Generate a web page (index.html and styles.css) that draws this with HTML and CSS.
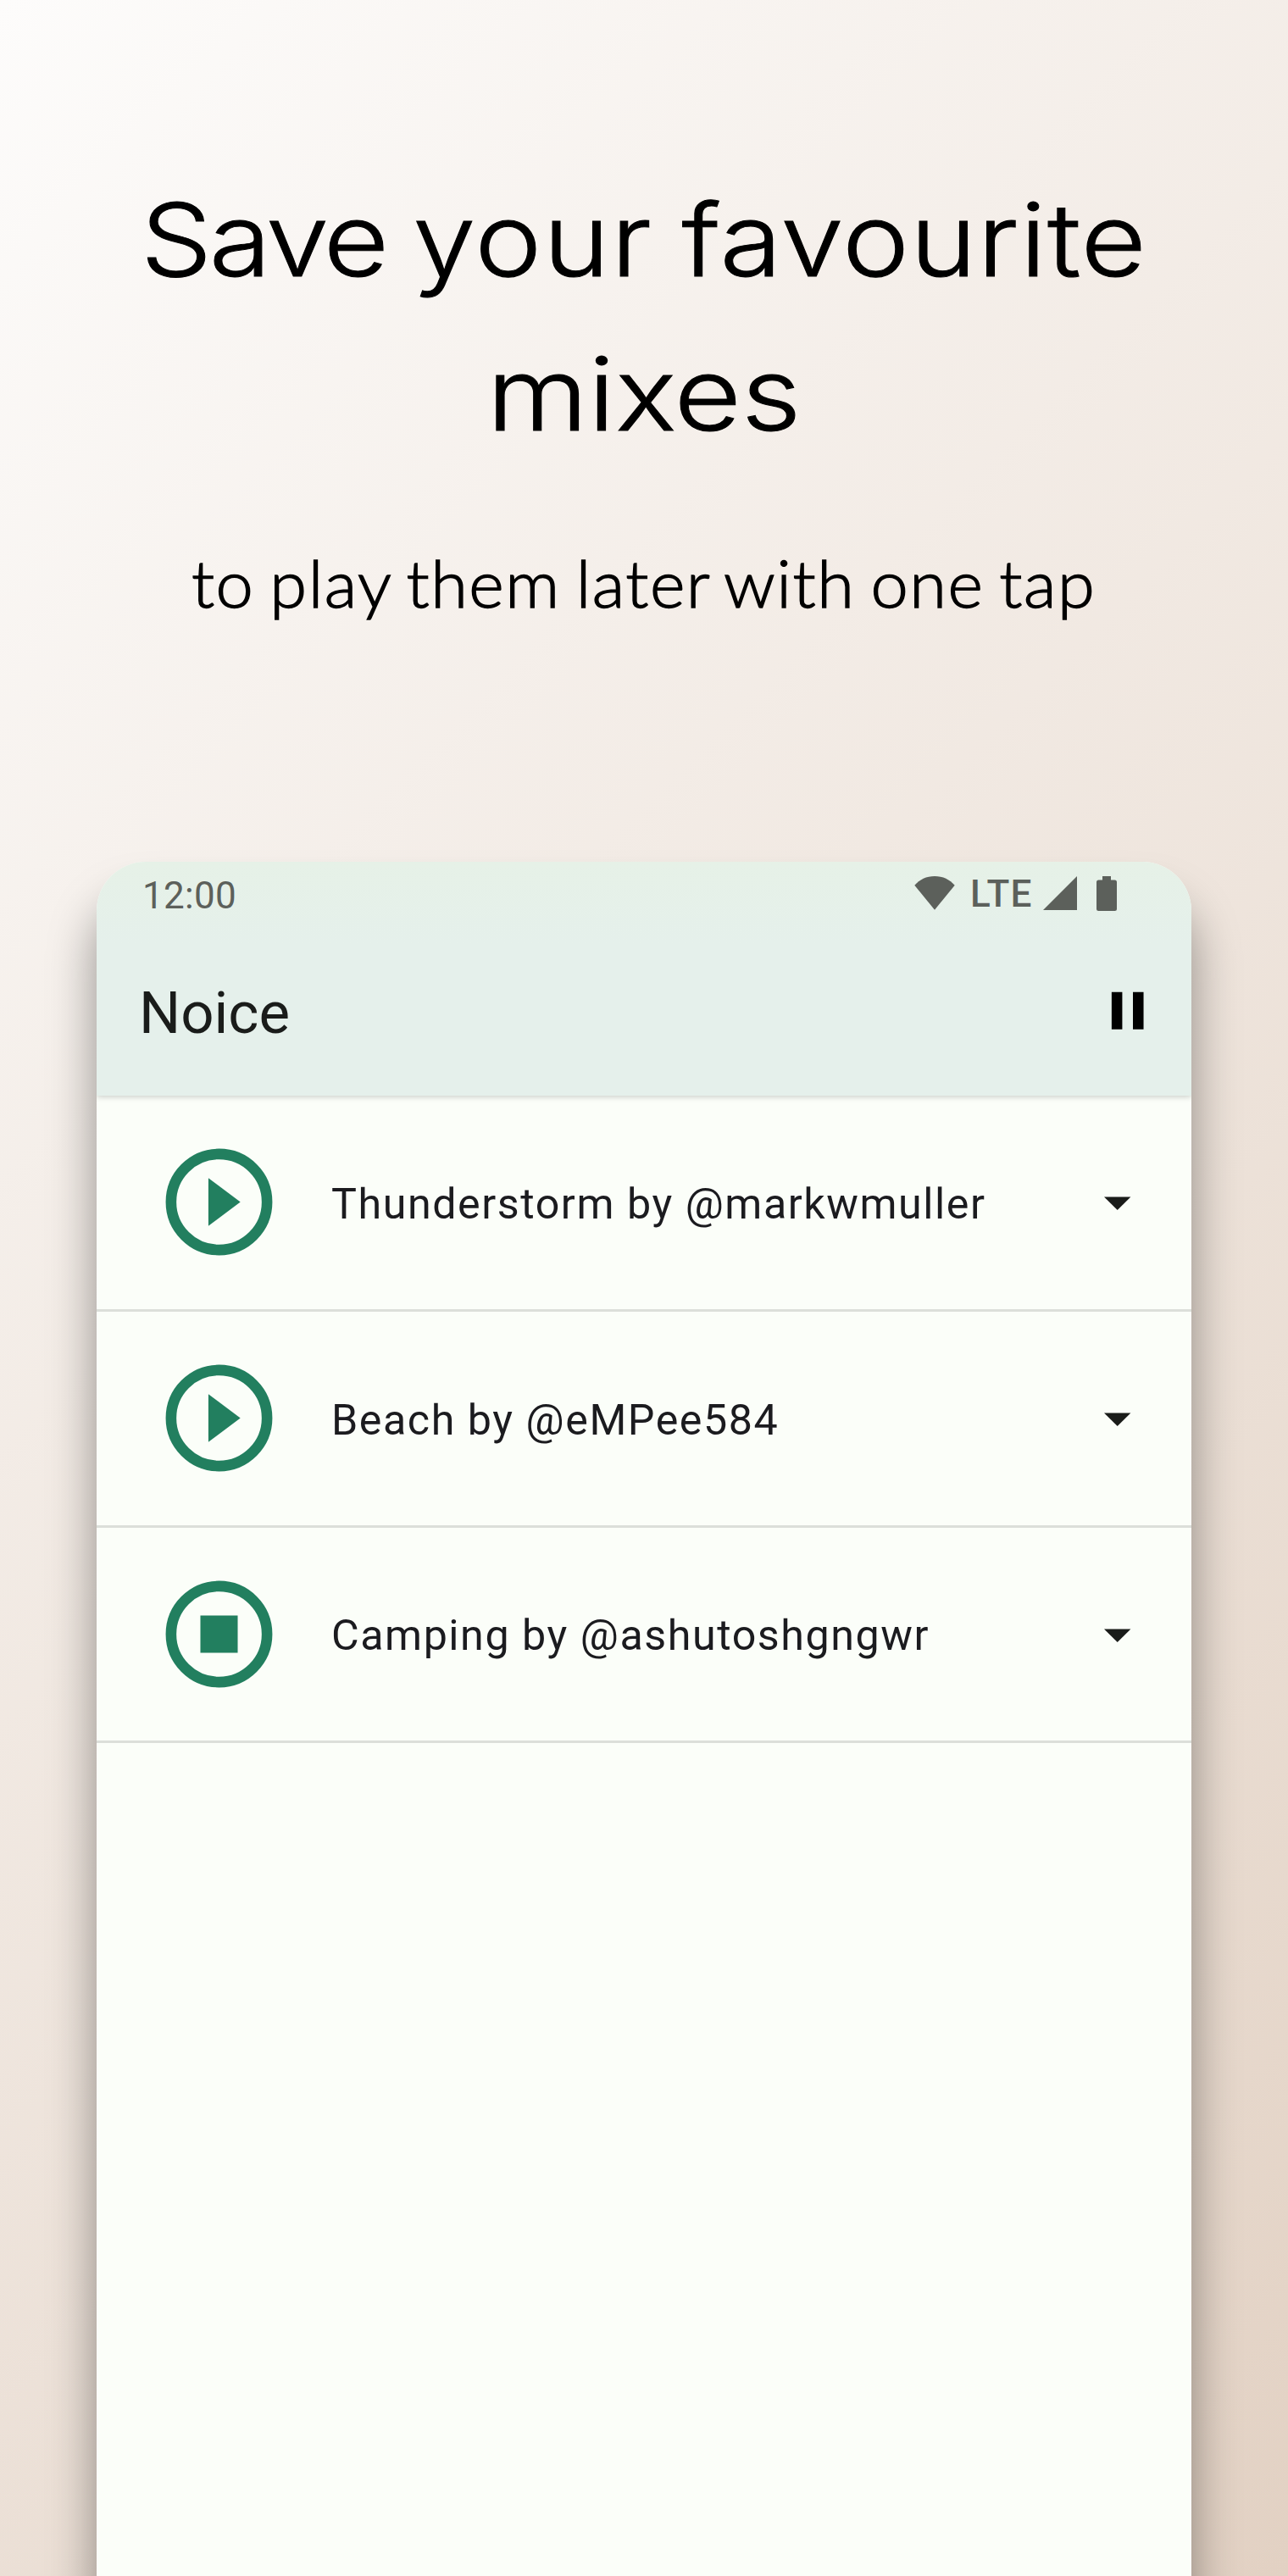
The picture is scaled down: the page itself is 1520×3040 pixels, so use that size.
FILE: index.html
```html
<!DOCTYPE html>
<html lang="en">
<head>
<meta charset="utf-8">
<title>Noice</title>
<link rel="stylesheet" href="styles.css">
</head>
<body>
<main class="promo">
  <header class="hero">
    <h1 class="headline"><span class="line line-first"><span class="word-save">Save</span> <span class="word-your">your</span> <span class="word-favourite">favourite</span></span><span class="line line-second">mixes</span></h1>
    <p class="tagline"><span class="tagline-text">to play them later with one tap</span></p>
  </header>
  <section class="phone">
    <div class="top">
      <div class="status">
        <span class="clock">12:00</span>
        <div class="indicators">
          <svg class="wifi" viewBox="0 0 48 40"><path d="M24 0C14.500 0 6 4 .3 10.800L24 39.700 47.700 10.800C42 4 33.500 0 24 0z"/></svg>
          <span class="network">LTE</span>
          <svg class="signal" viewBox="0 0 40 40"><path d="M0 40L40 0V40z"/></svg>
          <svg class="battery" viewBox="0 0 24 41"><path d="M7 0h10v4.500h4.500q2.500 0 2.500 2.500v31.500q0 2.500-2.500 2.500h-19q-2.500 0-2.500-2.500v-31.500q0-2.500 2.500-2.500H7z"/></svg>
        </div>
      </div>
      <div class="appbar">
        <h2 class="title">Noice</h2>
        <svg class="pause" viewBox="0 0 24 24"><path d="M6 19h4V5H6v14zm8-14v14h4V5h-4z"/></svg>
      </div>
    </div>
    <ul class="presets">
      <li class="preset">
        <svg class="action" viewBox="0 0 24 24"><circle class="ring" cx="12" cy="12" r="9"/><path d="M10 16.500l6-4.500-6-4.500v9z"/></svg>
        <span class="name">Thunderstorm by @markwmuller</span>
        <svg class="caret" viewBox="0 0 24 24"><path d="M7 10l5 5 5-5z"/></svg>
      </li>
      <li class="preset">
        <svg class="action" viewBox="0 0 24 24"><circle class="ring" cx="12" cy="12" r="9"/><path d="M10 16.500l6-4.500-6-4.500v9z"/></svg>
        <span class="name">Beach by @eMPee584</span>
        <svg class="caret" viewBox="0 0 24 24"><path d="M7 10l5 5 5-5z"/></svg>
      </li>
      <li class="preset">
        <svg class="action" viewBox="0 0 24 24"><circle class="ring" cx="12" cy="12" r="9"/><path d="M8.500 8.500h7v7h-7z"/></svg>
        <span class="name">Camping by @ashutoshgngwr</span>
        <svg class="caret" viewBox="0 0 24 24"><path d="M7 10l5 5 5-5z"/></svg>
      </li>
    </ul>
  </section>
</main>
</body>
</html>
```
FILE: styles.css
```css
* { box-sizing: border-box; }

body {
  margin: 0;
  font-family: Roboto, "Liberation Sans", sans-serif;
}

.promo {
  display: flex;
  flex-direction: column;
  align-items: center;
  width: 1520px;
  height: 3040px;
  overflow: hidden;
  background: linear-gradient(135deg, #fdfcfb 0%, #e2d1c3 100%);
}

.hero {
  flex: none;
  width: 1520px;
  height: 1017px;
  padding-top: 192px;
  color: #000;
  text-align: center;
}

.headline {
  margin: 0;
  font-family: Inter, "Open Sans", sans-serif;
  font-size: 119px;
  font-weight: 300;
  line-height: 182px;
  -webkit-text-stroke: 1px #000;
}

.line {
  display: block;
  white-space: nowrap;
}

.line-first { transform: scaleX(1.12); }
.line-second { transform: scaleX(1.15); }

.word-save { margin-right: -5px; letter-spacing: -3.300px; }
.word-your { margin-right: -3px; letter-spacing: 1.400px; }
.word-favourite { letter-spacing: 0.900px; }

.tagline {
  margin: 81px 0 0;
  font-family: Lato, "Open Sans", sans-serif;
  font-size: 77px;
  font-weight: 300;
  line-height: 100px;
  -webkit-text-stroke: 1.400px #000;
}

.tagline-text {
  display: inline-block;
  white-space: nowrap;
  letter-spacing: 1.500px;
  word-spacing: -5px;
  transform: scaleX(1.031);
}

.phone {
  flex: none;
  width: 1292px;
  height: 2200px;
  overflow: hidden;
  border-radius: 58px 58px 0 0;
  background: #fbfef9;
  box-shadow: 0 48px 56px rgba(0, 0, 0, 0.4);
}

.top {
  position: relative;
  height: 276px;
  background: linear-gradient(#e6f1e7, #e5f0eb 35%);
  box-shadow: 0 1px 7px rgba(0, 0, 0, 0.22);
}

.status {
  display: flex;
  align-items: flex-start;
  justify-content: space-between;
  height: 75px;
  padding: 14px 88px 0 54px;
  color: #5c605b;
}

.clock {
  padding-top: 1px;
  font-size: 44px;
  letter-spacing: 0.300px;
  line-height: 50px;
}

.indicators {
  display: flex;
  align-items: flex-start;
  padding-top: 3px;
  fill: #5c605b;
}

.wifi { width: 48px; height: 40px; margin-right: 18px; }

.network {
  width: 86px;
  padding-top: 1px;
  font-size: 44px;
  font-weight: 500;
  letter-spacing: 1.200px;
  line-height: 40px;
}

.signal { width: 40px; height: 40px; margin-right: 23px; }
.battery { width: 24px; height: 41px; }

.appbar {
  display: flex;
  align-items: center;
  justify-content: space-between;
  height: 201px;
  padding: 0 38px 0 50px;
}

.title {
  margin: 0;
  padding-top: 6px;
  color: #1a1c1a;
  font-size: 69px;
  font-weight: 400;
  line-height: 80px;
}

.pause { width: 75.400px; height: 75.400px; }

.presets {
  margin: 0;
  padding: 0;
  list-style: none;
}

.preset {
  display: flex;
  align-items: center;
  height: 254.800px;
  padding: 0 50px 0 69px;
  border-bottom: 3.500px solid #dcdfda;
}

.action {
  width: 151px;
  height: 151px;
  fill: #227f5f;
}

.ring {
  fill: none;
  stroke: #227f5f;
  stroke-width: 2;
}

.name {
  flex: 1;
  margin-left: 57px;
  padding-top: 4px;
  color: #1b1b1f;
  font-size: 50.200px;
  letter-spacing: 1.550px;
  line-height: 60px;
}

.caret {
  width: 75.400px;
  height: 75.400px;
  fill: #1a1c1a;
}
```
